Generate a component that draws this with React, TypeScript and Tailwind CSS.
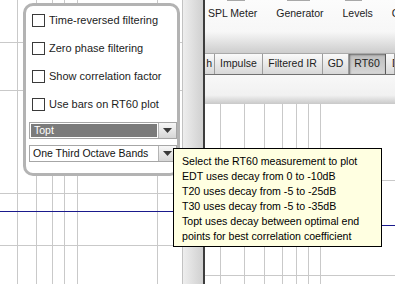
import React from 'react';

const leftCols = [17, 36, 52, 64, 77, 157];
const leftRows = [42, 90, 193, 245];
const rightCols = [15, 39, 59, 77, 91, 103, 115];
const rightRows = [76, 171];

const options = [
  'Time-reversed filtering',
  'Zero phase filtering',
  'Show correlation factor',
  'Use bars on RT60 plot',
];

const tools = ['SPL Meter', 'Generator', 'Levels', 'C'];

const tabs = [
  { label: 'h', w: 'w-[10px]', active: false },
  { label: 'Impulse', w: 'w-[48px]', active: false },
  { label: 'Filtered IR', w: 'w-[60px]', active: false },
  { label: 'GD', w: 'w-[26px]', active: false },
  { label: 'RT60', w: 'w-[37px]', active: true },
  { label: 'D', w: 'flex-1', active: false },
];

const tipLines = [
  'Select the RT60 measurement to plot',
  'EDT uses decay from 0 to -10dB',
  'T20 uses decay from -5 to -25dB',
  'T30 uses decay from -5 to -35dB',
  'Topt uses decay between optimal end',
  'points for best correlation coefficient',
];

const Arrow = () => (
  <div className="flex w-[18px] items-center justify-center border-l border-[#b4b4b4] bg-gradient-to-b from-[#f7f7f7] to-[#d6d6d6]">
    <svg width="9" height="5" viewBox="0 0 9 5">
      <path d="M0 0h9L4.5 5z" fill="#3a3a3a" />
    </svg>
  </div>
);

const Combo = ({ value, selected }: { value: string; selected?: boolean }) => (
  <div className="flex h-[17px] border border-[#a6a6a6] bg-white text-[10.5px]">
    <div
      className={`flex flex-1 items-center pl-[3px] ${
        selected ? 'm-px bg-[#7b7b7b] text-white' : 'text-[#111]'
      }`}
    >
      {value}
    </div>
    <Arrow />
  </div>
);

const App = () => {
  return (
    <div className="relative flex h-[284px] w-[395px] overflow-hidden bg-white font-['Liberation_Sans',Arial,sans-serif] text-[11px] text-[#1c1c1c]">
      {/* Left plot with floating options panel */}
      <div className="relative h-full w-[182px] shrink-0">
        <svg width="182" height="284" className="block">
          {leftCols.map((x) => (
            <line key={x} x1={x + 0.5} y1="0" x2={x + 0.5} y2="284" stroke="#c9c9c9" />
          ))}
          {leftRows.map((y) => (
            <line key={y} x1="0" y1={y + 0.5} x2="182" y2={y + 0.5} stroke="#c9c9c9" />
          ))}
          <line x1="0" y1="211.5" x2="182" y2="211.5" stroke="#1a1a8c" />
        </svg>

        <div className="absolute left-[23px] top-[3px] flex h-[173px] w-[157px] flex-col rounded-[10px] border-[3px] border-[#b3b3b3] bg-white">
          <div className="flex flex-col pl-[6px]">
            {options.map((o) => (
              <div key={o} className="flex h-[28px] items-center gap-[4px]">
                <div className="h-[13px] w-[13px] border border-[#3a3a3a] bg-white" />
                <span>{o}</span>
              </div>
            ))}
          </div>
          <div className="mt-[4px] flex flex-col gap-[6px] pl-[3px]">
            <Combo value="Topt" selected />
            <Combo value="One Third Octave Bands" />
          </div>
        </div>
      </div>

      {/* Divider strip */}
      <div className="h-full w-[23px] shrink-0 border-l border-r-2 border-l-[#c2c2c2] border-r-[#3d3d3d] bg-gradient-to-r from-[#eeeeee] to-[#d0d0d0]" />

      {/* Main window */}
      <div className="flex min-w-0 flex-1 flex-col text-[10.5px]">
        <div className="flex h-[53px] flex-col bg-gradient-to-b from-[#fcfcfc] via-[#f7f7f7] via-60% to-[#cdcdcd]">
          <svg width="190" height="2" className="block">
            <rect x="22" y="0" width="18" height="1" fill="#a8a8a8" />
            <rect x="82" y="0" width="23" height="1" fill="#a8a8a8" />
            <rect x="140" y="0" width="17" height="1" fill="#a8a8a8" />
          </svg>
          <div className="mt-[4px] flex gap-[19px] pl-[3px] text-[#222]">
            {tools.map((t) => (
              <span key={t} className="whitespace-nowrap">
                {t}
              </span>
            ))}
          </div>
        </div>

        <div className="flex h-[22px] border-y border-t-[#a9a9a9] border-b-[#707070]">
          {tabs.map((t) => (
            <div
              key={t.label}
              className={`flex ${t.w} items-center overflow-hidden whitespace-nowrap border-r ${
                t.label === 'h' ? 'justify-end pr-[2px]' : t.label === 'D' ? 'pl-[6px]' : 'justify-center'
              } ${
                t.active
                  ? 'border-[#5a5a5a] bg-gradient-to-b from-[#bdbdbd] to-[#d6d6d6] shadow-[inset_1px_1px_2px_#6a6a6a]'
                  : 'border-[#9c9c9c] bg-gradient-to-b from-[#fafafa] to-[#d8d8d8]'
              } text-[#222]`}
            >
              {t.label}
            </div>
          ))}
        </div>

        <div className="h-[29px] bg-gradient-to-b from-[#f8f8f8] via-[#f1f1f1] via-70% to-[#c9c9c9]" />

        <div className="flex-1 bg-white">
          <svg width="190" height="180" className="block">
            {rightCols.map((x) => (
              <line key={x} x1={x + 0.5} y1="0" x2={x + 0.5} y2="180" stroke="#c9c9c9" />
            ))}
            {rightRows.map((y) => (
              <line key={y} x1="0" y1={y + 0.5} x2="190" y2={y + 0.5} stroke="#c9c9c9" />
            ))}
            <line x1="0" y1="121.5" x2="190" y2="121.5" stroke="#1a1a8c" />
          </svg>
        </div>
      </div>

      {/* Tooltip */}
      <div className="absolute left-[173px] top-[148px] h-[99px] w-[209px] border border-black bg-[#ffffe1] pl-[8px] pt-[5px] text-[10.6px] text-black">
        {tipLines.map((l) => (
          <div key={l} className="whitespace-nowrap leading-[15px]">
            {l}
          </div>
        ))}
      </div>
    </div>
  );
};

export default App;
